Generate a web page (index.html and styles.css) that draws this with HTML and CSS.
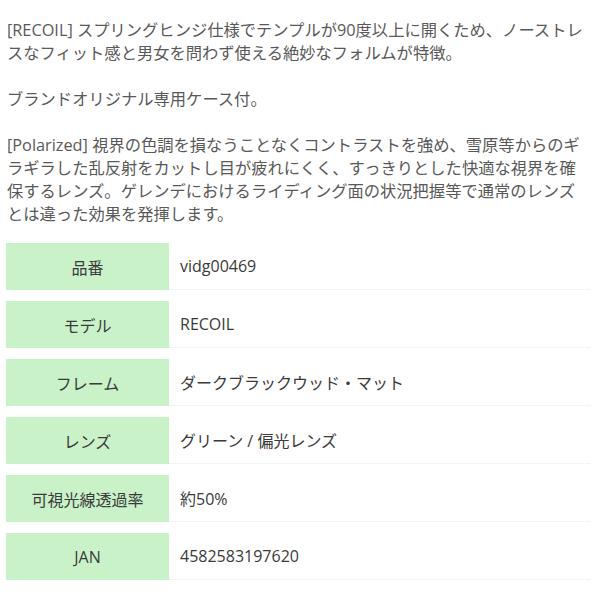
FILE: index.html
```html
<!DOCTYPE html>
<html lang="ja">
<head>
<meta charset="utf-8">
<title>RECOIL</title>
<link rel="stylesheet" href="styles.css">
</head>
<body>
<div class="page">
  <p class="desc">[RECOIL] スプリングヒンジ仕様でテンプルが90度以上に開くため、ノーストレスなフィット感と男女を問わず使える絶妙なフォルムが特徴。</p>
  <p class="desc">ブランドオリジナル専用ケース付。</p>
  <p class="desc">[Polarized] 視界の色調を損なうことなくコントラストを強め、雪原等からのギラギラした乱反射をカットし目が疲れにくく、すっきりとした快適な視界を確保するレンズ。ゲレンデにおけるライディング面の状況把握等で通常のレンズとは違った効果を発揮します。</p>
  <table class="spec">
    <tr><th>品番</th><td>vidg00469</td></tr>
    <tr><th>モデル</th><td>RECOIL</td></tr>
    <tr><th>フレーム</th><td>ダークブラックウッド・マット</td></tr>
    <tr><th>レンズ</th><td>グリーン / 偏光レンズ</td></tr>
    <tr><th>可視光線透過率</th><td>約50%</td></tr>
    <tr><th>JAN</th><td>4582583197620</td></tr>
  </table>
</div>
</body>
</html>
```
FILE: styles.css
```css
html, body {
  margin: 0;
  padding: 0;
  background: #fff;
}
body {
  font-family: "Open Sans", "Noto Sans CJK JP", sans-serif;
  color: #595959;
}
.page {
  padding: 19px 6px 0 7px;
  width: 580px;
}
.desc {
  margin: 0 0 23px 0;
  font-size: 16.3px;
  line-height: 23px;
}
.spec {
  border-collapse: separate;
  border-spacing: 0 11px;
  width: 584px;
  margin: -17px 0 0 -1px;
  font-size: 16px;
  color: #3a3a3a;
}
.spec th {
  width: 163px;
  height: 47px;
  padding: 0;
  background: #c9f2c9;
  font-weight: normal;
  text-align: center;
  vertical-align: middle;
}
.spec td {
  padding: 0 0 0 11px;
  border-bottom: 1px dotted #dbeef0;
  vertical-align: middle;
}
```
